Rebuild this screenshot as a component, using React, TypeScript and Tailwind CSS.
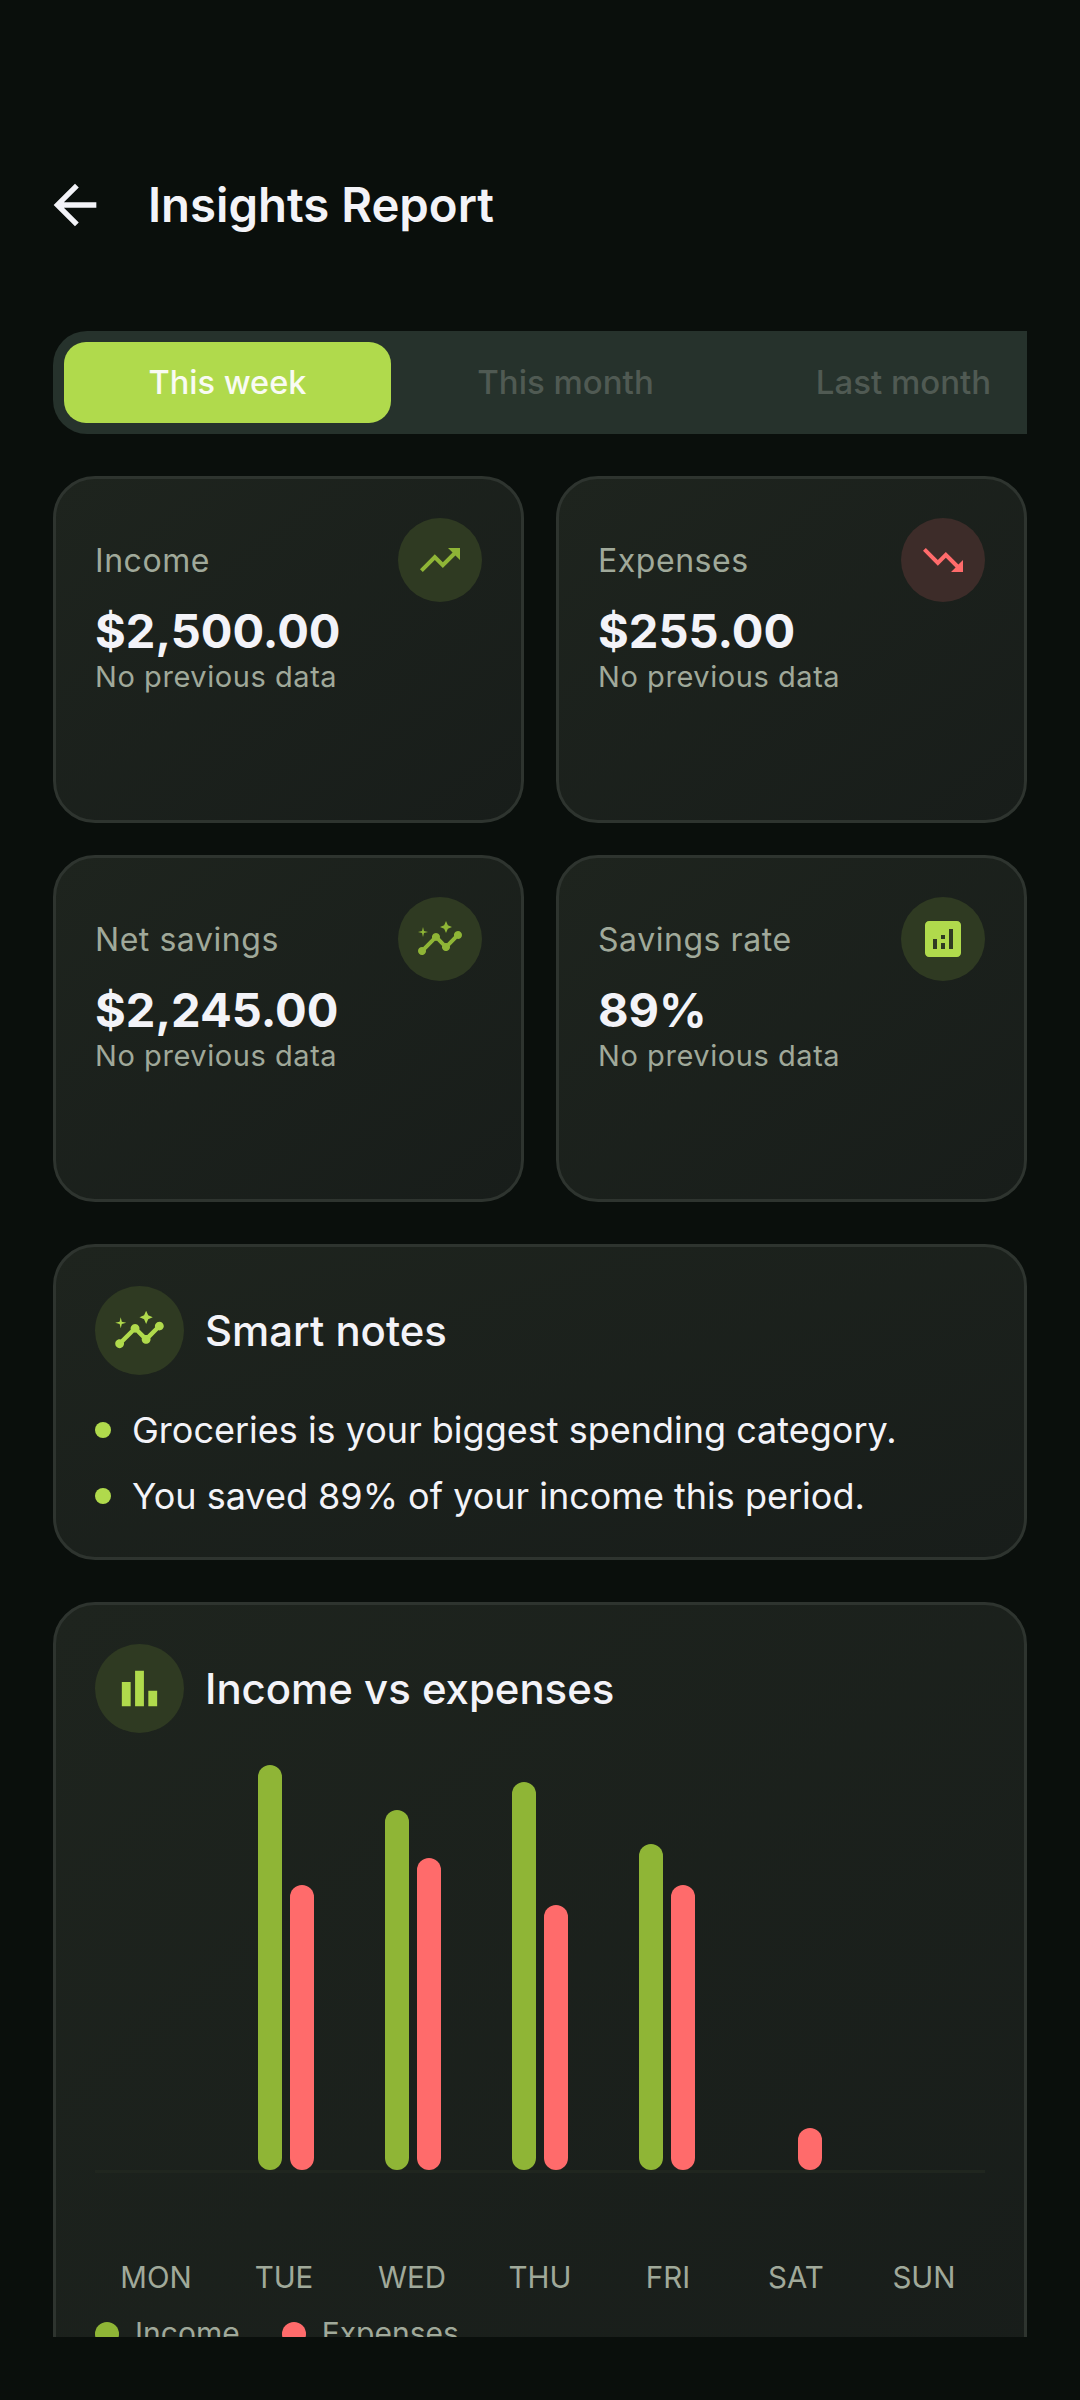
import React from 'react';
import { MdArrowBack, MdTrendingUp, MdTrendingDown, MdInsights, MdAnalytics, MdBarChart } from 'react-icons/md';

const fontStack = { fontFamily: 'Inter, "Noto Sans", sans-serif' };

const days = [
  { label: 'MON', income: 0, expense: 0 },
  { label: 'TUE', income: 405, expense: 285 },
  { label: 'WED', income: 360, expense: 312 },
  { label: 'THU', income: 388, expense: 265 },
  { label: 'FRI', income: 326, expense: 285 },
  { label: 'SAT', income: 0, expense: 42 },
  { label: 'SUN', income: 0, expense: 0 },
];

const cardClass =
  'rounded-[42px] border-[3px] border-[#2e342f] bg-gradient-to-br from-[#1e241e] to-[#181d1a]';

const StatCard: React.FC<{ label: string; value: string; circle: string; icon: React.ReactNode }> = ({
  label,
  value,
  circle,
  icon,
}) => (
  <div className={`${cardClass} h-[347px] pl-[39px] pr-[39px] pt-[39px]`}>
    <div className="flex items-center justify-between">
      <span className="mt-[2px] text-[32px] leading-[40px] tracking-[0.55px] text-[#a0a99a]">{label}</span>
      <div className={`flex h-[84px] w-[84px] items-center justify-center rounded-full ${circle}`}>{icon}</div>
    </div>
    <div className="text-[47px] font-bold leading-[57px] text-[#f3f3f8]">{value}</div>
    <div className="text-[29px] leading-[35px] tracking-[0.56px] text-[#a0a99a]">No previous data</div>
  </div>
);

const SectionHead: React.FC<{ title: string; icon: React.ReactNode }> = ({ title, icon }) => (
  <div className="flex items-center gap-[21px]">
    <div className="flex h-[89px] w-[89px] items-center justify-center rounded-full bg-[#2f3a22]">{icon}</div>
    <span className="mt-[2px] text-[41.9px] font-medium text-[#f3f3f8]">{title}</span>
  </div>
);

export default function App() {
  return (
    <div className="h-[2400px] w-[1080px] overflow-hidden bg-[#0a0f0c]" style={fontStack}>
      <div className="h-[2337px] overflow-hidden px-[53px]">
        <header className="mt-[165px] flex h-[80px] items-center">
          <MdArrowBack size={64} className="ml-[-10px] text-[#f3f3f8]" />
          <h1 className="ml-[41px] text-[47.3px] font-semibold text-[#f3f3f8]">Insights Report</h1>
        </header>

        <div className="mt-[86px] flex h-[103px] items-center gap-[11px] overflow-hidden rounded-l-[34px] bg-[#26322c] pl-[11px]">
          <div className="flex h-[81px] w-[327px] shrink-0 items-center justify-center rounded-[22px] bg-[#b0da4c] pt-[1px] text-[32.5px] font-medium text-[#f9fbf3]">
            This week
          </div>
          <div className="flex h-[81px] w-[327px] shrink-0 items-center justify-center text-[33px] font-medium text-[#505a53]">
            This month
          </div>
          <div className="flex h-[81px] w-[327px] shrink-0 items-center justify-center text-[33px] font-medium text-[#505a53]">
            Last month
          </div>
        </div>

        <div className="mt-[42px] grid grid-cols-2 gap-x-[32px] gap-y-[32px]">
          <StatCard
            label="Income"
            value="$2,500.00"
            circle="bg-[#2f3a22]"
            icon={<MdTrendingUp size={48} className="text-[#8fb536]" />}
          />
          <StatCard
            label="Expenses"
            value="$255.00"
            circle="bg-[#3d2c29]"
            icon={<MdTrendingDown size={48} className="text-[#ff6b6b]" />}
          />
          <StatCard
            label="Net savings"
            value="$2,245.00"
            circle="bg-[#2f3a22]"
            icon={<MdInsights size={48} className="text-[#8fb536]" />}
          />
          <StatCard
            label="Savings rate"
            value="89%"
            circle="bg-[#2f3a22]"
            icon={<MdAnalytics size={48} className="text-[#b0da4c]" />}
          />
        </div>

        <section className={`${cardClass} mt-[42px] h-[316px] pl-[39px] pr-[38px] pt-[39px]`}>
          <SectionHead title="Smart notes" icon={<MdInsights size={53} className="text-[#b0da4c]" />} />
          <ul className="mt-[30px] flex flex-col gap-[16px]">
            {['Groceries is your biggest spending category.', 'You saved 89% of your income this period.'].map(note => (
              <li key={note} className="flex items-center gap-[21px] text-[36px] leading-[50px] text-[#f3f3f8]">
                <span className="h-[16px] w-[16px] rounded-full bg-[#b0da4c]" />
                {note}
              </li>
            ))}
          </ul>
        </section>

        <section className={`${cardClass} mt-[42px] h-[800px] px-[39px] pt-[39px]`}>
          <SectionHead title="Income vs expenses" icon={<MdBarChart size={53} className="text-[#b0da4c]" />} />
          <div className="mt-[23px] grid h-[417px] grid-cols-7 border-b-[3px] border-[#20261f]">
            {days.map(d => (
              <div key={d.label} className="flex items-end justify-center gap-[8px]">
                <div className="w-[24px] rounded-full bg-[#8fb536]" style={{ height: d.income }} />
                <div className="w-[24px] rounded-full bg-[#ff6b6b]" style={{ height: d.expense }} />
              </div>
            ))}
          </div>
          <div className="mx-[-3px] mt-[84px] grid grid-cols-7">
            {days.map(d => (
              <span key={d.label} className="text-center text-[29.5px] leading-[40px] text-[#a0a99a]">
                {d.label}
              </span>
            ))}
          </div>
          <div className="mt-[14px] flex items-center gap-[42px] text-[30px] text-[#a0a99a]">
            <span className="flex items-center gap-[16px]">
              <span className="h-[24px] w-[24px] rounded-full bg-[#8fb536]" />
              Income
            </span>
            <span className="flex items-center gap-[16px]">
              <span className="h-[24px] w-[24px] rounded-full bg-[#ff6b6b]" />
              Expenses
            </span>
          </div>
        </section>
      </div>
    </div>
  );
}
